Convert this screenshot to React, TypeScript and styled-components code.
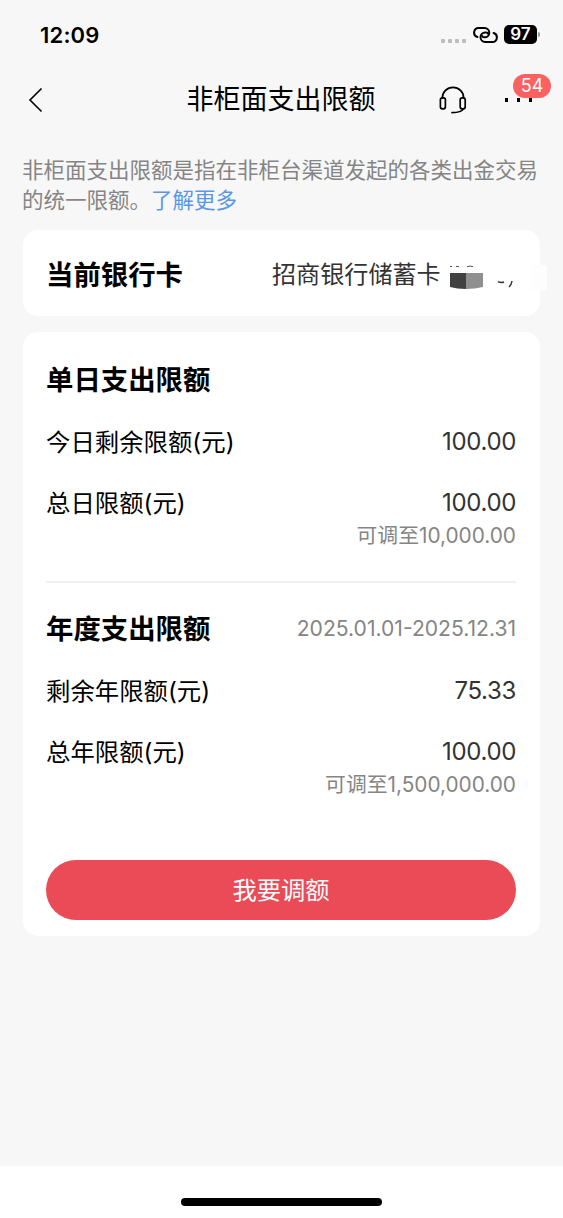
import React from 'react';
import styled, { createGlobalStyle } from 'styled-components';

const GlobalStyle = createGlobalStyle`
  * { box-sizing: border-box; }
  body {
    margin: 0;
    background: #f7f7f7;
    font-family: Inter, 'Noto Sans CJK SC', sans-serif;
    color: #000;
  }
`;

const Screen = styled.div`
  width: 563px;
  height: 1218px;
  display: flex;
  flex-direction: column;
  background: #f7f7f7;
  overflow: hidden;
`;

const StatusBar = styled.header`
  height: 69px;
  flex: none;
  display: flex;
  align-items: center;
  justify-content: space-between;
  padding: 0 23px 0 40px;
`;

const Clock = styled.span`
  font-size: 22px;
  font-weight: 600;
  letter-spacing: 0.2px;
  line-height: 28px;
`;

const StatusIcons = styled.div`
  display: flex;
  align-items: center;
`;

const SignalDots = styled.div`
  display: flex;
  gap: 3px;
  margin: 12px 7px 0 0;
`;

const SignalDot = styled.i`
  width: 4px;
  height: 4px;
  border-radius: 1px;
  background: #bcbcbc;
`;

const Battery = styled.div`
  width: 33px;
  height: 19px;
  margin-left: 6px;
  border-radius: 5px;
  background: #000;
  color: #fff;
  font-size: 17px;
  font-weight: 600;
  line-height: 19px;
  text-align: center;
`;

const BatteryTip = styled.i`
  width: 2px;
  height: 5px;
  margin-left: 1px;
  border-radius: 0 2px 2px 0;
  background: #999;
`;

const NavBar = styled.nav`
  height: 61px;
  flex: none;
  display: grid;
  grid-template-columns: 140px 1fr 140px;
  align-items: center;
`;

const BackIcon = styled.svg`
  margin-left: 28px;
`;

const Title = styled.h1`
  margin: 0 1px 0 0;
  font-size: 27px;
  font-weight: 400;
  line-height: 36px;
  text-align: center;
  white-space: nowrap;
`;

const NavActions = styled.div`
  display: flex;
  align-items: center;
  padding-left: 16px;
`;

const More = styled.div`
  position: relative;
  display: flex;
  gap: 9px;
  margin-left: 38px;
`;

const MoreDot = styled.i`
  width: 3px;
  height: 4px;
  background: #000;
`;

const Badge = styled.span`
  position: absolute;
  left: 8px;
  top: -24px;
  width: 38px;
  height: 24px;
  border-radius: 12px;
  background: #fb6161;
  color: #fff;
  font-size: 18px;
  line-height: 24px;
  text-align: center;
`;

const Content = styled.main`
  flex: 1;
  padding: 25px 23px 0;
`;

const Notice = styled.p`
  margin: 0 -4px 15px -1px;
  color: #858585;
  font-size: 21.5px;
  line-height: 30px;
`;

const NoticeLine = styled.span`
  display: block;
  white-space: nowrap;
`;

const Link = styled.a`
  color: #5a97e6;
`;

const Card = styled.section`
  width: 517px;
  border-radius: 15px;
  background: #fff;
  padding: 0 24px 0 23px;
`;

const AccountCard = styled(Card)`
  height: 86px;
  display: flex;
  align-items: center;
  justify-content: space-between;
  margin-bottom: 16px;
  padding-top: 3px;
`;

const LimitCard = styled(Card)`
  height: 604px;
  padding-top: 32px;
`;

const Heading = styled.h2`
  margin: 0;
  font-size: 27.4px;
  font-weight: 700;
  line-height: 32px;
  white-space: nowrap;
`;

const Account = styled.div`
  position: relative;
  width: 244px;
  color: #333;
  font-size: 24.1px;
  line-height: 32px;
  white-space: nowrap;
`;

const Redaction = styled.svg`
  position: absolute;
  left: 170px;
  top: 0;
`;

const SectionHead = styled.div`
  display: flex;
  align-items: center;
  justify-content: space-between;
  height: 32px;
`;

const Period = styled.span`
  color: #858585;
  font-size: 21.1px;
  line-height: 30px;
`;

const Row = styled.div<{ $gap: number }>`
  display: flex;
  align-items: center;
  justify-content: space-between;
  height: 32px;
  margin-top: ${(p) => p.$gap}px;
`;

const Label = styled.span`
  font-size: 24.4px;
  line-height: 32px;
`;

const Amount = styled.span`
  color: #333;
  font-size: 24px;
  letter-spacing: -0.35px;
  line-height: 32px;
`;

const Hint = styled.div`
  height: 32px;
  color: #858585;
  font-size: 20.8px;
  line-height: 34px;
  text-align: right;
`;

const Divider = styled.hr`
  height: 2px;
  margin: 30px 0;
  border: 0;
  background: #f1f1f1;
`;

const AdjustButton = styled.button`
  display: block;
  width: 470px;
  height: 60px;
  margin-top: 60px;
  padding: 0;
  border: 0;
  border-radius: 30px;
  background: #ea4b56;
  color: #fff;
  font-family: inherit;
  font-size: 24.3px;
  line-height: 60px;
`;

const HomeArea = styled.footer`
  height: 52px;
  flex: none;
  display: flex;
  justify-content: center;
  padding-top: 32px;
  background: #fff;
`;

const HomeIndicator = styled.div`
  width: 201px;
  height: 8px;
  border-radius: 4px;
  background: #000;
`;

interface LimitRowProps {
  label: string;
  value: string;
  hint?: string;
  gap: number;
}

function LimitRow({ label, value, hint, gap }: LimitRowProps) {
  return (
    <>
      <Row $gap={gap}>
        <Label>{label}</Label>
        <Amount>{value}</Amount>
      </Row>
      {hint && <Hint>{hint}</Hint>}
    </>
  );
}

export default function App() {
  return (
    <Screen>
      <GlobalStyle />
      <StatusBar>
        <Clock>12:09</Clock>
        <StatusIcons>
          <SignalDots>
            {[0, 1, 2, 3].map((i) => (
              <SignalDot key={i} />
            ))}
          </SignalDots>
          <svg width="25" height="16" viewBox="0 0 25 16" fill="none" stroke="#000" strokeWidth="2" strokeLinecap="round">
            <path d="M4.4 10A4.6 4.6 0 0 1 5.6 1H11.6a4.6 4.6 0 0 1 0 9.3c-1.300 0-2-.4-2.300-1.200" />
            <path d="M20.600 6A4.600 4.600 0 0 1 19.400 15H12.200a4.700 4.700 0 0 1 0-9.400h.8c1.300 0 2 .4 2.300 1.200" />
          </svg>
          <Battery>97</Battery>
          <BatteryTip />
        </StatusIcons>
      </StatusBar>
      <NavBar>
        <BackIcon width="16" height="26" viewBox="0 0 16 26" fill="none" stroke="#000" strokeWidth="1.6">
          <path d="M13.5 1.5 2 13l11.5 11.5" />
        </BackIcon>
        <Title>非柜面支出限额</Title>
        <NavActions>
          <svg width="28" height="28" viewBox="0 0 28 28" fill="none" stroke="#000" strokeWidth="1.7" strokeLinecap="round">
            <path d="M3.4 12V11.5a10.6 10.2 0 0 1 21.2 0V12" />
            <rect x="1.4" y="11.8" width="5" height="11" rx="2" />
            <rect x="21.2" y="11.8" width="5" height="11" rx="2" />
            <path d="M24.3 23c-1.2 2.5-5 3.6-11.3 3.6" />
          </svg>
          <More>
            <MoreDot />
            <MoreDot />
            <MoreDot />
            <Badge>54</Badge>
          </More>
        </NavActions>
      </NavBar>
      <Content>
        <Notice>
          <NoticeLine>非柜面支出限额是指在非柜台渠道发起的各类出金交易</NoticeLine>
          <NoticeLine>
            的统一限额。<Link>了解更多</Link>
          </NoticeLine>
        </Notice>
        <AccountCard>
          <Heading>当前银行卡</Heading>
          <Account>
            招商银行储蓄卡
            <Redaction width="106" height="32" viewBox="0 0 106 32">
              <rect x="90" y="6" width="15" height="25" fill="#fdfdfd" />
              <path d="M8 7.5h2M14 7.5h3M25 7.7q3-1.3 6 0" stroke="#555" strokeWidth="1" fill="none" />
              <path d="M8 14h16v16q-9 0-16-2z" fill="#414141" />
              <path d="M24 14h17v14q-8 2-17 2z" fill="#8f8f8f" />
              <path d="M56 22.6q3 1.6 6 .4M70 22q-.6 4-3 6" stroke="#333" strokeWidth="1.5" fill="none" />
            </Redaction>
          </Account>
        </AccountCard>
        <LimitCard>
          <SectionHead>
            <Heading>单日支出限额</Heading>
          </SectionHead>
          <LimitRow label="今日剩余限额(元)" value="100.00" gap={30} />
          <LimitRow label="总日限额(元)" value="100.00" hint="可调至10,000.00" gap={29} />
          <Divider />
          <SectionHead>
            <Heading>年度支出限额</Heading>
            <Period>2025.01.01-2025.12.31</Period>
          </SectionHead>
          <LimitRow label="剩余年限额(元)" value="75.33" gap={30} />
          <LimitRow label="总年限额(元)" value="100.00" hint="可调至1,500,000.00" gap={29} />
          <AdjustButton>我要调额</AdjustButton>
        </LimitCard>
      </Content>
      <HomeArea>
        <HomeIndicator />
      </HomeArea>
    </Screen>
  );
}
